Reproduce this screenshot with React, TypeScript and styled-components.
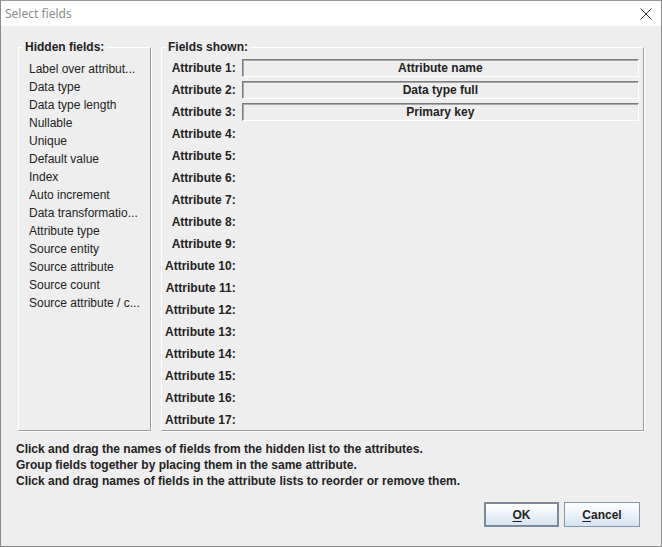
import React from 'react'
import styled, { createGlobalStyle } from 'styled-components'

const GlobalStyle = createGlobalStyle`
  html, body {
    margin: 0;
    padding: 0;
    background: #eeeeee;
  }
  body {
    font-family: 'Liberation Sans', Arial, sans-serif;
    color: #222;
  }
`

const Window = styled.div`
  width: 662px;
  height: 547px;
  box-sizing: border-box;
  border: 1px solid #8a8a8a;
  border-top-color: #9a9a9a;
  background: #eeeeee;
  display: flex;
  flex-direction: column;
`

const TitleBar = styled.div`
  height: 25px;
  flex: none;
  background: #ffffff;
  display: flex;
  align-items: center;
  justify-content: space-between;
  padding: 0 9px 0 4px;
  font-family: 'Noto Sans', 'Liberation Sans', sans-serif;
  font-size: 12px;
  color: #8c8c8c;
`

const CloseIcon = styled.svg`
  width: 12px;
  height: 12px;
  display: block;
`

const Content = styled.div`
  flex: 1;
  display: flex;
  flex-direction: column;
  padding: 14px 17px 19px 17px;
  min-height: 0;
`

const Panels = styled.div`
  display: flex;
  gap: 10px;
  height: 391px;
  flex: none;
`

const Group = styled.fieldset<{ width?: number }>`
  margin: 0;
  min-width: 0;
  box-sizing: border-box;
  border: 1px solid;
  border-color: #ffffff #9c9c9c #9c9c9c #ffffff;
  box-shadow: 1px 1px 0 #ffffff;
  ${({ width }) => (width ? `width: ${width}px; flex: none;` : 'flex: 1;')}
  overflow: hidden;
`

const HiddenGroup = styled(Group)`
  padding: 6px 4px 0 10px;
`

const ShownGroup = styled(Group)`
  padding: 3px 4px 0 3px;
`

const Legend = styled.legend<{ offset: number }>`
  padding: 0 2px;
  margin-left: ${({ offset }) => offset}px;
  font-size: 12px;
  font-weight: bold;
  line-height: 14px;
  color: #222;
`

const HiddenItem = styled.div`
  font-size: 12px;
  line-height: 18px;
  height: 18px;
  white-space: nowrap;
  color: #222;
`

const AttrGrid = styled.div`
  display: grid;
  grid-template-columns: max-content 1fr;
  grid-auto-rows: 22px;
  column-gap: 5px;
  align-items: center;
`

const AttrLabel = styled.div`
  justify-self: end;
  font-size: 12px;
  font-weight: bold;
  white-space: nowrap;
  color: #222;
  margin-right: 1px;
`

const AttrField = styled.div`
  height: 18px;
  box-sizing: border-box;
  border: 1px solid;
  border-color: #7c7c7c #ffffff #ffffff #7c7c7c;
  box-shadow: inset 1px 1px 0 #a8a8a8;
  display: flex;
  align-items: center;
  justify-content: center;
  font-size: 12px;
  font-weight: bold;
  color: #222;
`

const Instructions = styled.div`
  margin: 10px 0 0 -2px;
  font-size: 12px;
  font-weight: bold;
  line-height: 16px;
  color: #222;
`

const ButtonRow = styled.div`
  margin-top: auto;
  margin-right: 4px;
  display: flex;
  justify-content: flex-end;
  gap: 5px;
`

const Button = styled.button<{ primary?: boolean }>`
  width: ${({ primary }) => (primary ? 75 : 76)}px;
  height: 25px;
  box-sizing: border-box;
  border: ${({ primary }) => (primary ? '2px solid #7a8a99' : '1px solid #8596a6')};
  background: linear-gradient(to bottom, #ffffff 0%, #f1f6fb 35%, #d6e3f0 100%);
  font-family: 'Liberation Sans', Arial, sans-serif;
  font-size: 12px;
  font-weight: bold;
  color: #222;
  padding: 0;
  cursor: pointer;

  u {
    text-decoration: underline;
    text-underline-offset: 2px;
  }
`

const hiddenFields = [
  'Label over attribut...',
  'Data type',
  'Data type length',
  'Nullable',
  'Unique',
  'Default value',
  'Index',
  'Auto increment',
  'Data transformatio...',
  'Attribute type',
  'Source entity',
  'Source attribute',
  'Source count',
  'Source attribute / c...',
]

const shownFields: Record<number, string> = {
  1: 'Attribute name',
  2: 'Data type full',
  3: 'Primary key',
}

const attributes = Array.from({ length: 17 }, (_, i) => i + 1)

export default function App() {
  return (
    <>
      <GlobalStyle />
      <Window>
        <TitleBar>
          <span>Select fields</span>
          <CloseIcon viewBox="0 0 12 12">
            <path d="M0.5 0.5 L11.5 11.5 M11.5 0.5 L0.5 11.5" stroke="#333" strokeWidth="1" fill="none" />
          </CloseIcon>
        </TitleBar>
        <Content>
          <Panels>
            <HiddenGroup width={133}>
              <Legend offset={-6}>Hidden fields:</Legend>
              {hiddenFields.map((f) => (
                <HiddenItem key={f}>{f}</HiddenItem>
              ))}
            </HiddenGroup>
            <ShownGroup>
              <Legend offset={1}>Fields shown:</Legend>
              <AttrGrid>
                {attributes.map((n) => (
                  <React.Fragment key={n}>
                    <AttrLabel>Attribute {n}:</AttrLabel>
                    {shownFields[n] ? <AttrField>{shownFields[n]}</AttrField> : <div />}
                  </React.Fragment>
                ))}
              </AttrGrid>
            </ShownGroup>
          </Panels>
          <Instructions>
            <div>Click and drag the names of fields from the hidden list to the attributes.</div>
            <div>Group fields together by placing them in the same attribute.</div>
            <div>Click and drag names of fields in the attribute lists to reorder or remove them.</div>
          </Instructions>
          <ButtonRow>
            <Button primary>
              <u>O</u>K
            </Button>
            <Button>
              <u>C</u>ancel
            </Button>
          </ButtonRow>
        </Content>
      </Window>
    </>
  )
}
